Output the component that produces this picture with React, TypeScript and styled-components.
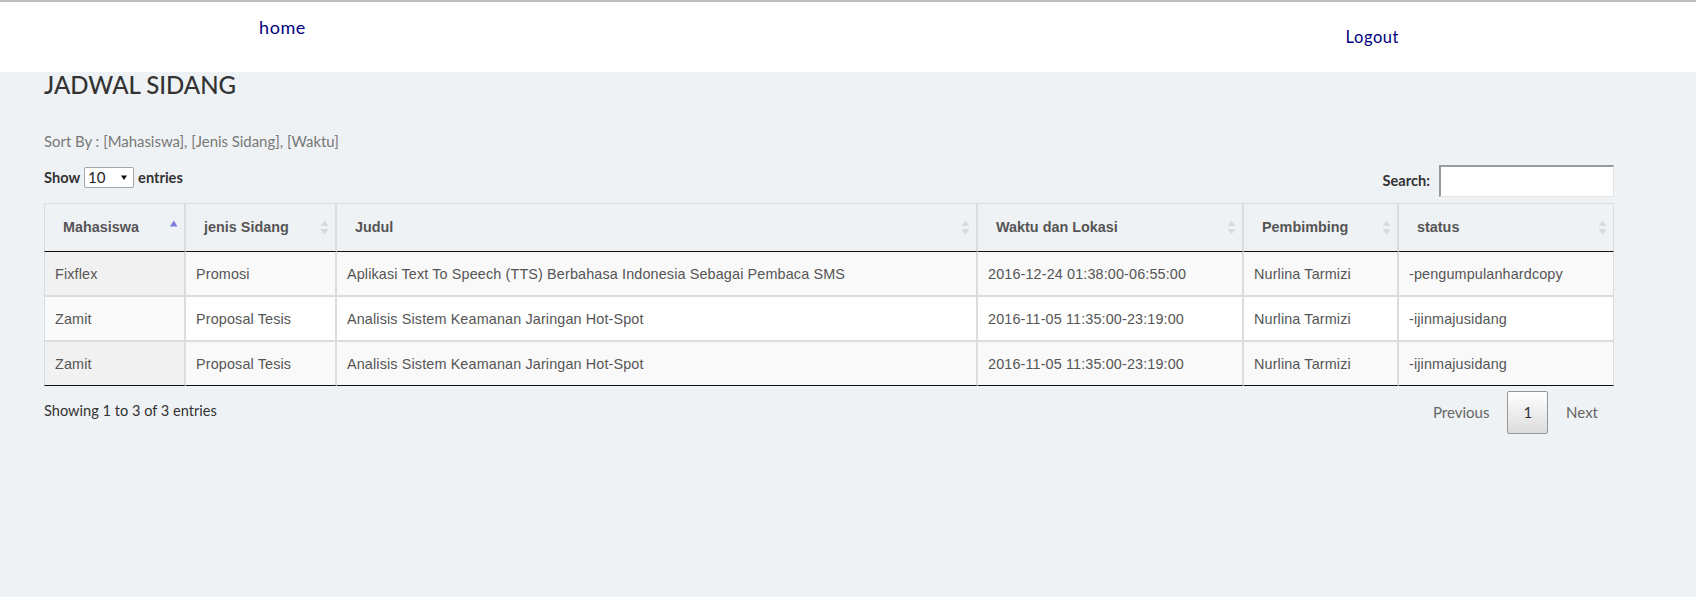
import React from "react";
import styled, { createGlobalStyle } from "styled-components";

const GlobalStyle = createGlobalStyle`
  html, body { margin: 0; padding: 0; background: #eff2f5; }
  body {
    font-family: Lato, "Liberation Sans", sans-serif;
    font-size: 14.6px;
    color: #333;
    min-height: 597px;
  }
  *, *::before, *::after { box-sizing: border-box; }
`;

const TopBar = styled.header`
  height: 72px;
  background: #fff;
  border-top: 2px solid #bebebe;
  display: flex;
  align-items: flex-start;
  padding-top: 14px;
`;

const NavLink = styled.a<{ $size: number; $push?: boolean }>`
  font-family: Lato, sans-serif;
  font-size: ${(p) => p.$size}px;
  line-height: ${(p) => (p.$size > 17 ? 22 : 20)}px;
  letter-spacing: ${(p) => (p.$size > 17 ? 0.6 : 0.55)}px;
  color: #000080;
  text-decoration: none;
  margin-left: ${(p) => (p.$push ? "auto" : "259px")};
  margin-right: ${(p) => (p.$push ? "297px" : "0")};
  margin-top: ${(p) => (p.$push ? "11px" : "0")};
`;

const Main = styled.main`
  padding-left: 44px;
  width: 1614px;
`;

const Title = styled.h3`
  margin: 0;
  font-size: 24px;
  line-height: 26px;
  font-weight: 500;
  color: #333;
`;

const SortBy = styled.p`
  margin: 33px 0 0;
  font-size: 14.9px;
  line-height: 20px;
  color: #777;
`;

const Controls = styled.div`
  margin-top: 14px;
  height: 32px;
  display: flex;
  justify-content: space-between;
  align-items: flex-start;
`;

const LengthLabel = styled.label`
  display: flex;
  align-items: center;
  gap: 4px;
  margin-top: 2px;
  font-weight: 700;
  line-height: 20px;
  color: #333;
`;

const SelectBox = styled.span`
  position: relative;
  display: inline-block;
  width: 50px;
  height: 21px;
  border: 1px solid #a6a6a6;
  border-radius: 2px;
  background: #fff;
`;

const Select = styled.select`
  appearance: none;
  -webkit-appearance: none;
  border: none;
  outline: none;
  background: transparent;
  width: 100%;
  height: 100%;
  padding: 0 0 0 3px;
  font-family: Lato, sans-serif;
  font-size: 15px;
  font-weight: 400;
  color: #222;
  line-height: 19px;
`;

const SelectArrow = styled.svg`
  position: absolute;
  right: 6px;
  top: 7px;
  pointer-events: none;
`;

const SearchLabel = styled.label`
  display: flex;
  align-items: center;
  gap: 9px;
  font-weight: 700;
  line-height: 20px;
  height: 32px;
  color: #333;
`;

const SearchInput = styled.input`
  width: 175px;
  height: 32px;
  border-top: 2px solid #9a9a9a;
  border-left: 2px solid #9a9a9a;
  border-right: 1px solid #e4e4e4;
  border-bottom: 1px solid #e4e4e4;
  background: #fff;
  outline: none;
  padding: 0 4px;
`;

const Table = styled.table`
  margin-top: 6px;
  width: 1570px;
  table-layout: fixed;
  border-collapse: separate;
  border-spacing: 0;
  font-family: "Liberation Sans", Arial, sans-serif;
  font-size: 14.4px;
`;

const Th = styled.th<{ $w: number }>`
  width: ${(p) => p.$w}px;
  text-align: left;
  font-weight: 700;
  color: #555;
  line-height: 20px;
  padding: 13px 6px 14px 18px;
  border-top: 1px solid #dcdcdc;
  border-right: 2px solid #dcdcdc;
  border-bottom: 1px solid #111;
  &:first-child { border-left: 1px solid #dcdcdc; }
  &:last-child { border-right: 1px solid #dcdcdc; }
`;

const ThInner = styled.div`
  display: flex;
  justify-content: space-between;
  align-items: center;
`;

const Row = styled.tr<{ $odd: boolean }>`
  background: ${(p) => (p.$odd ? "#f9f9f9" : "#ffffff")};
  & > td:first-child {
    background: ${(p) => (p.$odd ? "#f1f1f1" : "#fafafa")};
  }
  &:last-child > td { border-bottom: 1px solid #111; }
`;

const Td = styled.td`
  color: #555;
  line-height: 20px;
  letter-spacing: 0.13px;
  padding: 12px 10px 11px 10px;
  white-space: nowrap;
  overflow: hidden;
  border-right: 2px solid #dcdcdc;
  border-bottom: 2px solid #dcdcdc;
  &:first-child { border-left: 1px solid #dcdcdc; }
  &:last-child { border-right: 1px solid #dcdcdc; }
`;

const Footer = styled.div`
  width: 1570px;
  margin-top: 5px;
  display: flex;
  justify-content: space-between;
  align-items: flex-start;
`;

const Info = styled.div`
  margin-top: 10px;
  line-height: 20px;
  color: #333;
`;

const Pager = styled.div`
  display: flex;
  font-size: 15px;
`;

const PageButton = styled.a<{ $current?: boolean }>`
  display: block;
  height: 43px;
  line-height: 41px;
  padding: 0 15px;
  margin-left: 2px;
  border-radius: 2px;
  border: 1px solid ${(p) => (p.$current ? "#979797" : "transparent")};
  background: ${(p) =>
    p.$current ? "linear-gradient(to bottom, #ffffff 0%, #dcdcdc 100%)" : "transparent"};
  color: ${(p) => (p.$current ? "#333" : "#666")};
  text-decoration: none;
  cursor: default;
`;

const SortIcon = ({ active }: { active?: boolean }) => (
  <svg width="9" height="15" viewBox="0 0 9 15" aria-hidden="true">
    {active ? (
      <polygon points="1,6.5 4.8,0.5 8.5,6.5" fill="#7b7bd9" />
    ) : (
      <>
        <polygon points="0.5,6 4.5,0.5 8.5,6" fill="#d9d9d9" />
        <polygon points="0.5,9 4.5,14.5 8.5,9" fill="#d9d9d9" />
      </>
    )}
  </svg>
);

const columns = [
  { label: "Mahasiswa", w: 142, active: true },
  { label: "jenis Sidang", w: 151 },
  { label: "Judul", w: 641 },
  { label: "Waktu dan Lokasi", w: 266 },
  { label: "Pembimbing", w: 155 },
  { label: "status", w: 215 },
];

const rows = [
  [
    "Fixflex",
    "Promosi",
    "Aplikasi Text To Speech (TTS) Berbahasa Indonesia Sebagai Pembaca SMS",
    "2016-12-24 01:38:00-06:55:00",
    "Nurlina Tarmizi",
    "-pengumpulanhardcopy",
  ],
  [
    "Zamit",
    "Proposal Tesis",
    "Analisis Sistem Keamanan Jaringan Hot-Spot",
    "2016-11-05 11:35:00-23:19:00",
    "Nurlina Tarmizi",
    "-ijinmajusidang",
  ],
  [
    "Zamit",
    "Proposal Tesis",
    "Analisis Sistem Keamanan Jaringan Hot-Spot",
    "2016-11-05 11:35:00-23:19:00",
    "Nurlina Tarmizi",
    "-ijinmajusidang",
  ],
];

export default function App() {
  return (
    <>
      <GlobalStyle />
      <TopBar>
        <NavLink $size={18} href="#">home</NavLink>
        <NavLink $size={16.5} $push href="#">Logout</NavLink>
      </TopBar>
      <Main>
        <Title>JADWAL SIDANG</Title>
        <SortBy>Sort By : [Mahasiswa], [Jenis Sidang], [Waktu]</SortBy>
        <Controls>
          <LengthLabel>
            Show
            <SelectBox>
              <Select defaultValue="10">
                <option value="10">10</option>
                <option value="25">25</option>
                <option value="50">50</option>
                <option value="100">100</option>
              </Select>
              <SelectArrow width="6" height="5" viewBox="0 0 6 5">
                <polygon points="0,0.5 6,0.5 3,5" fill="#111" />
              </SelectArrow>
            </SelectBox>
            entries
          </LengthLabel>
          <SearchLabel>
            Search:
            <SearchInput type="search" />
          </SearchLabel>
        </Controls>
        <Table>
          <thead>
            <tr>
              {columns.map((c) => (
                <Th key={c.label} $w={c.w}>
                  <ThInner>
                    <span>{c.label}</span>
                    <SortIcon active={c.active} />
                  </ThInner>
                </Th>
              ))}
            </tr>
          </thead>
          <tbody>
            {rows.map((r, i) => (
              <Row key={i} $odd={i % 2 === 0}>
                {r.map((cell, j) => (
                  <Td key={j}>{cell}</Td>
                ))}
              </Row>
            ))}
          </tbody>
        </Table>
        <Footer>
          <Info>Showing 1 to 3 of 3 entries</Info>
          <Pager>
            <PageButton>Previous</PageButton>
            <PageButton $current>1</PageButton>
            <PageButton>Next</PageButton>
          </Pager>
        </Footer>
      </Main>
    </>
  );
}
